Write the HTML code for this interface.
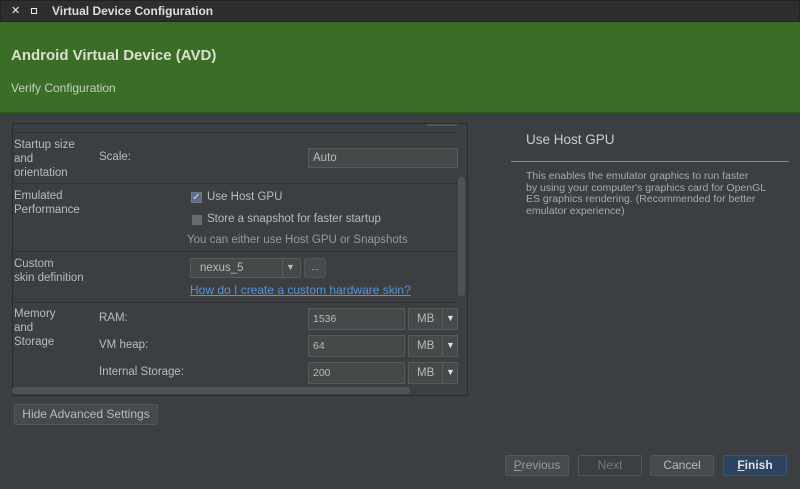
<!DOCTYPE html>
<html><head><style>
*{margin:0;padding:0;box-sizing:border-box}
body{width:800px;height:489px;background:#3c3f41;font-family:"Liberation Sans","DejaVu Sans",sans-serif;color:#bbbbbb;position:relative;overflow:hidden;font-size:11.5px}
.a{position:absolute;white-space:nowrap}
.tb{left:0;top:0;width:800px;height:22px;background:#2e2e2e;border:1px solid #222}
.green{left:0;top:22px;width:800px;height:91px;background:#3b6d26;border-bottom:1px solid #2f5a1e}
.box{left:12px;top:123px;width:456px;height:273px;border:1px solid #2b2b2b;background:#3c3f41}
.sep{position:absolute;height:1px;background:#323232;left:12px;width:445px}
.inp{position:absolute;border:1px solid #5a5a5a;background:#45494a;color:#bbb;padding-left:4px;font-size:11.5px}
.btn{position:absolute;border:1px solid #555;background:#474a4c;color:#bbb;text-align:center;font-size:12px;border-radius:2px}
</style></head><body>
<div class="a tb"></div>
<div class="a" style="left:11px;top:4px;color:#eee;font-size:11px;font-weight:bold">✕</div>
<div class="a" style="left:31px;top:8px;width:6px;height:6px;border:1.5px solid #eee"></div>
<div class="a" style="left:52px;top:4px;color:#ddd;font-weight:bold;font-size:12px">Virtual Device Configuration</div>
<div class="a green"></div>
<div class="a" style="left:11px;top:47px;color:#d8e0d0;font-weight:bold;font-size:15px">Android Virtual Device (AVD)</div>
<div class="a" style="left:11px;top:81px;color:#c4d4bc;font-size:12px">Verify Configuration</div>

<div class="a box"></div>
<div class="a" style="left:427px;top:124px;width:30px;height:2px;background:#555"></div>
<div class="sep" style="top:132px"></div>
<div class="a" style="left:14px;top:138px;line-height:14px">Startup size<br>and<br>orientation</div>
<div class="a" style="left:99px;top:151px">Scale:</div>
<div class="inp" style="left:308px;top:148px;width:150px;height:20px;line-height:18px">Auto</div>
<div class="sep" style="top:183px"></div>
<div class="a" style="left:14px;top:189px;line-height:14px">Emulated<br>Performance</div>
<div class="a" style="left:191px;top:192px;width:11px;height:11px;background:#5b6e8a;border:1px solid #6a7a90;color:#ddd;font-size:10px;line-height:9px;text-align:center">✓</div>
<div class="a" style="left:207px;top:191px">Use Host GPU</div>
<div class="a" style="left:192px;top:215px;width:10px;height:10px;background:#6a6a6a"></div>
<div class="a" style="left:207px;top:213px">Store a snapshot for faster startup</div>
<div class="a" style="left:187px;top:234px;color:#999">You can either use Host GPU or Snapshots</div>
<div class="sep" style="top:251px"></div>
<div class="a" style="left:14px;top:257px;line-height:14px">Custom<br>skin definition</div>
<div class="inp" style="left:190px;top:258px;width:111px;height:20px;line-height:18px;padding-left:9px">nexus_5</div>
<div class="a" style="left:282px;top:259px;width:1px;height:18px;background:#5a5a5a"></div>
<div class="a" style="left:286px;top:262px;font-size:9px">▼</div>
<div class="btn" style="left:304px;top:258px;width:22px;height:20px;line-height:16px;font-size:9px">...</div>
<div class="a" style="left:190px;top:283px;color:#5894d6;text-decoration:underline;font-size:12px">How do I create a custom hardware skin?</div>
<div class="sep" style="top:302px"></div>
<div class="a" style="left:14px;top:307px;line-height:14px">Memory<br>and<br>Storage</div>
<div class="a" style="left:99px;top:312px">RAM:</div>
<div class="a" style="left:99px;top:339px">VM heap:</div>
<div class="a" style="left:99px;top:366px">Internal Storage:</div>
<div class="inp" style="left:308px;top:308px;width:97px;height:22px;line-height:20px;font-size:10.5px">1536</div>
<div class="inp" style="left:308px;top:335px;width:97px;height:22px;line-height:20px;font-size:10.5px">64</div>
<div class="inp" style="left:308px;top:362px;width:97px;height:22px;line-height:20px;font-size:10.5px">200</div>
<div class="inp" style="left:408px;top:308px;width:50px;height:22px;line-height:20px;padding-left:8px">MB</div>
<div class="inp" style="left:408px;top:335px;width:50px;height:22px;line-height:20px;padding-left:8px">MB</div>
<div class="inp" style="left:408px;top:362px;width:50px;height:22px;line-height:20px;padding-left:8px">MB</div>
<div class="a" style="left:442px;top:309px;width:1px;height:20px;background:#5a5a5a"></div>
<div class="a" style="left:442px;top:336px;width:1px;height:20px;background:#5a5a5a"></div>
<div class="a" style="left:442px;top:363px;width:1px;height:20px;background:#5a5a5a"></div>
<div class="a" style="left:446px;top:313px;font-size:9px;color:#ddd">▼</div>
<div class="a" style="left:446px;top:340px;font-size:9px;color:#ddd">▼</div>
<div class="a" style="left:446px;top:367px;font-size:9px;color:#ddd">▼</div>
<div class="a" style="left:458px;top:177px;width:7px;height:119px;background:#4e5254;border-radius:3px"></div>
<div class="a" style="left:12px;top:387px;width:398px;height:7px;background:#4e5254;border-radius:3px"></div>
<div class="btn" style="left:14px;top:404px;width:144px;height:21px;line-height:19px">Hide Advanced Settings</div>

<div class="a" style="left:526px;top:132px;font-size:13.5px;color:#ccc">Use Host GPU</div>
<div class="a" style="left:511px;top:161px;width:278px;height:1px;background:#8a8a8a"></div>
<div class="a" style="left:526px;top:171px;font-size:10.5px;line-height:11.5px;color:#aaa">This enables the emulator graphics to run faster<br>by using your computer's graphics card for OpenGL<br>ES graphics rendering. (Recommended for better<br>emulator experience)</div>

<div class="btn" style="left:505px;top:455px;width:64px;height:21px;line-height:19px;color:#999"><u>P</u>revious</div>
<div class="btn" style="left:578px;top:455px;width:64px;height:21px;line-height:19px;background:#3c3f41;color:#777">Next</div>
<div class="btn" style="left:650px;top:455px;width:64px;height:21px;line-height:19px">Cancel</div>
<div class="btn" style="left:723px;top:455px;width:64px;height:21px;line-height:19px;background:#2d4460;border-color:#3d5572;color:#e0e0e0;font-weight:bold"><u>F</u>inish</div>
</body></html>
